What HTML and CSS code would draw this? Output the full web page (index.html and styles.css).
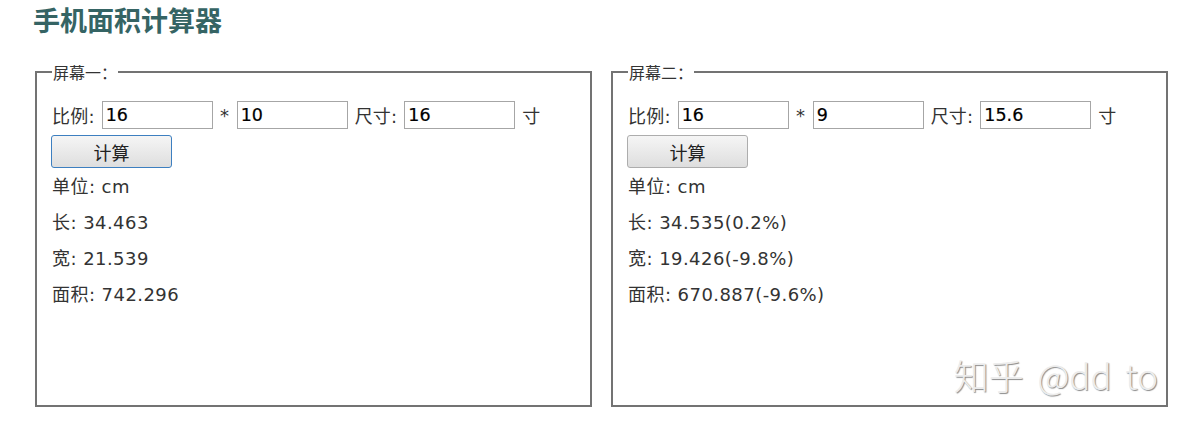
FILE: index.html
```html
<!DOCTYPE html>
<html lang="zh-CN">
<head>
<meta charset="utf-8">
<title>手机面积计算器</title>
<link rel="stylesheet" href="styles.css">
</head>
<body>
<h1 class="title">手机面积计算器</h1>
<div class="screens">
  <fieldset class="screen">
    <legend class="legend">屏幕一：</legend>
    <div class="inner">
      <div class="row">
        <span class="lbl">比例:</span>
        <input class="field" type="text" value="16">
        <span class="star">*</span>
        <input class="field" type="text" value="10">
        <span class="lbl">尺寸:</span>
        <input class="field" type="text" value="16">
        <span class="lbl">寸</span>
      </div>
      <button class="btn btn-focus" type="button">计算</button>
      <div class="results">
        <p class="line">单位: cm</p>
        <p class="line">长: 34.463</p>
        <p class="line">宽: 21.539</p>
        <p class="line">面积: 742.296</p>
      </div>
    </div>
  </fieldset>
  <fieldset class="screen">
    <legend class="legend">屏幕二：</legend>
    <div class="inner">
      <div class="row">
        <span class="lbl">比例:</span>
        <input class="field" type="text" value="16">
        <span class="star">*</span>
        <input class="field" type="text" value="9">
        <span class="lbl">尺寸:</span>
        <input class="field" type="text" value="15.6">
        <span class="lbl">寸</span>
      </div>
      <button class="btn" type="button">计算</button>
      <div class="results">
        <p class="line">单位: cm</p>
        <p class="line">长: 34.535(0.2%)</p>
        <p class="line">宽: 19.426(-9.8%)</p>
        <p class="line">面积: 670.887(-9.6%)</p>
      </div>
    </div>
    <div class="watermark">知乎 @dd to</div>
  </fieldset>
</div>
</body>
</html>
```
FILE: styles.css
```css
html, body {
  margin: 0;
  padding: 0;
  background: #ffffff;
}
body {
  font-family: "DejaVu Sans", "Noto Sans CJK SC", sans-serif;
  color: #333333;
}
.title {
  margin: 0;
  padding-left: 33px;
  height: 40px;
  line-height: 40px;
  font-family: "Noto Sans CJK SC", sans-serif;
  font-size: 27px;
  font-weight: 700;
  color: #356464;
}
.screens {
  display: grid;
  grid-template-columns: 557px 557px;
  column-gap: 19px;
  padding-left: 35px;
  margin-top: 22px;
}
.screen {
  position: relative;
  margin: 0;
  min-width: 0;
  box-sizing: border-box;
  border: 2px solid #737373;
  padding: 19px 15px 0 15px;
}
.legend {
  padding: 0 1px;
  font-family: "Noto Sans CJK SC", sans-serif;
  font-size: 16px;
  line-height: 20px;
  color: #333333;
}
.inner {
  height: 304px;
}
.row {
  display: flex;
  align-items: center;
  gap: 7px;
  height: 28px;
  font-size: 18px;
  letter-spacing: 0.2px;
}
.lbl {
  white-space: nowrap;
}
.field {
  box-sizing: border-box;
  width: 111px;
  height: 28px;
  margin: 0;
  padding: 0 3px;
  border: 1px solid #a6a6a6;
  font-family: "DejaVu Sans", sans-serif;
  font-size: 17.5px;
  font-weight: 500;
  letter-spacing: 0;
  color: #000000;
  background: #ffffff;
  outline: none;
  -webkit-text-stroke: 0.2px #000000;
}
.star {
  width: 10px;
  text-align: center;
}
.btn {
  display: block;
  box-sizing: border-box;
  width: 121px;
  height: 33px;
  margin: 6px 0 0 -1px;
  padding: 0;
  border: 1px solid #adadad;
  border-radius: 3px;
  background: linear-gradient(#f5f5f5, #dedede);
  font-family: "Noto Sans CJK SC", sans-serif;
  font-size: 18px;
  color: #222222;
}
.btn-focus {
  border-color: #3d7fc0;
}
.results {
  padding-top: 1px;
}
.line {
  margin: 0;
  height: 36px;
  line-height: 36px;
  font-size: 18px;
  letter-spacing: 0.45px;
}
.watermark {
  position: absolute;
  right: 8px;
  bottom: 10px;
  font-family: "Noto Sans CJK SC", sans-serif;
  font-weight: 300;
  font-size: 35px;
  line-height: 40px;
  color: #ececec;
  text-shadow: 1px 1px 1px #8a8a8a;
  word-spacing: 6px;
}
```
